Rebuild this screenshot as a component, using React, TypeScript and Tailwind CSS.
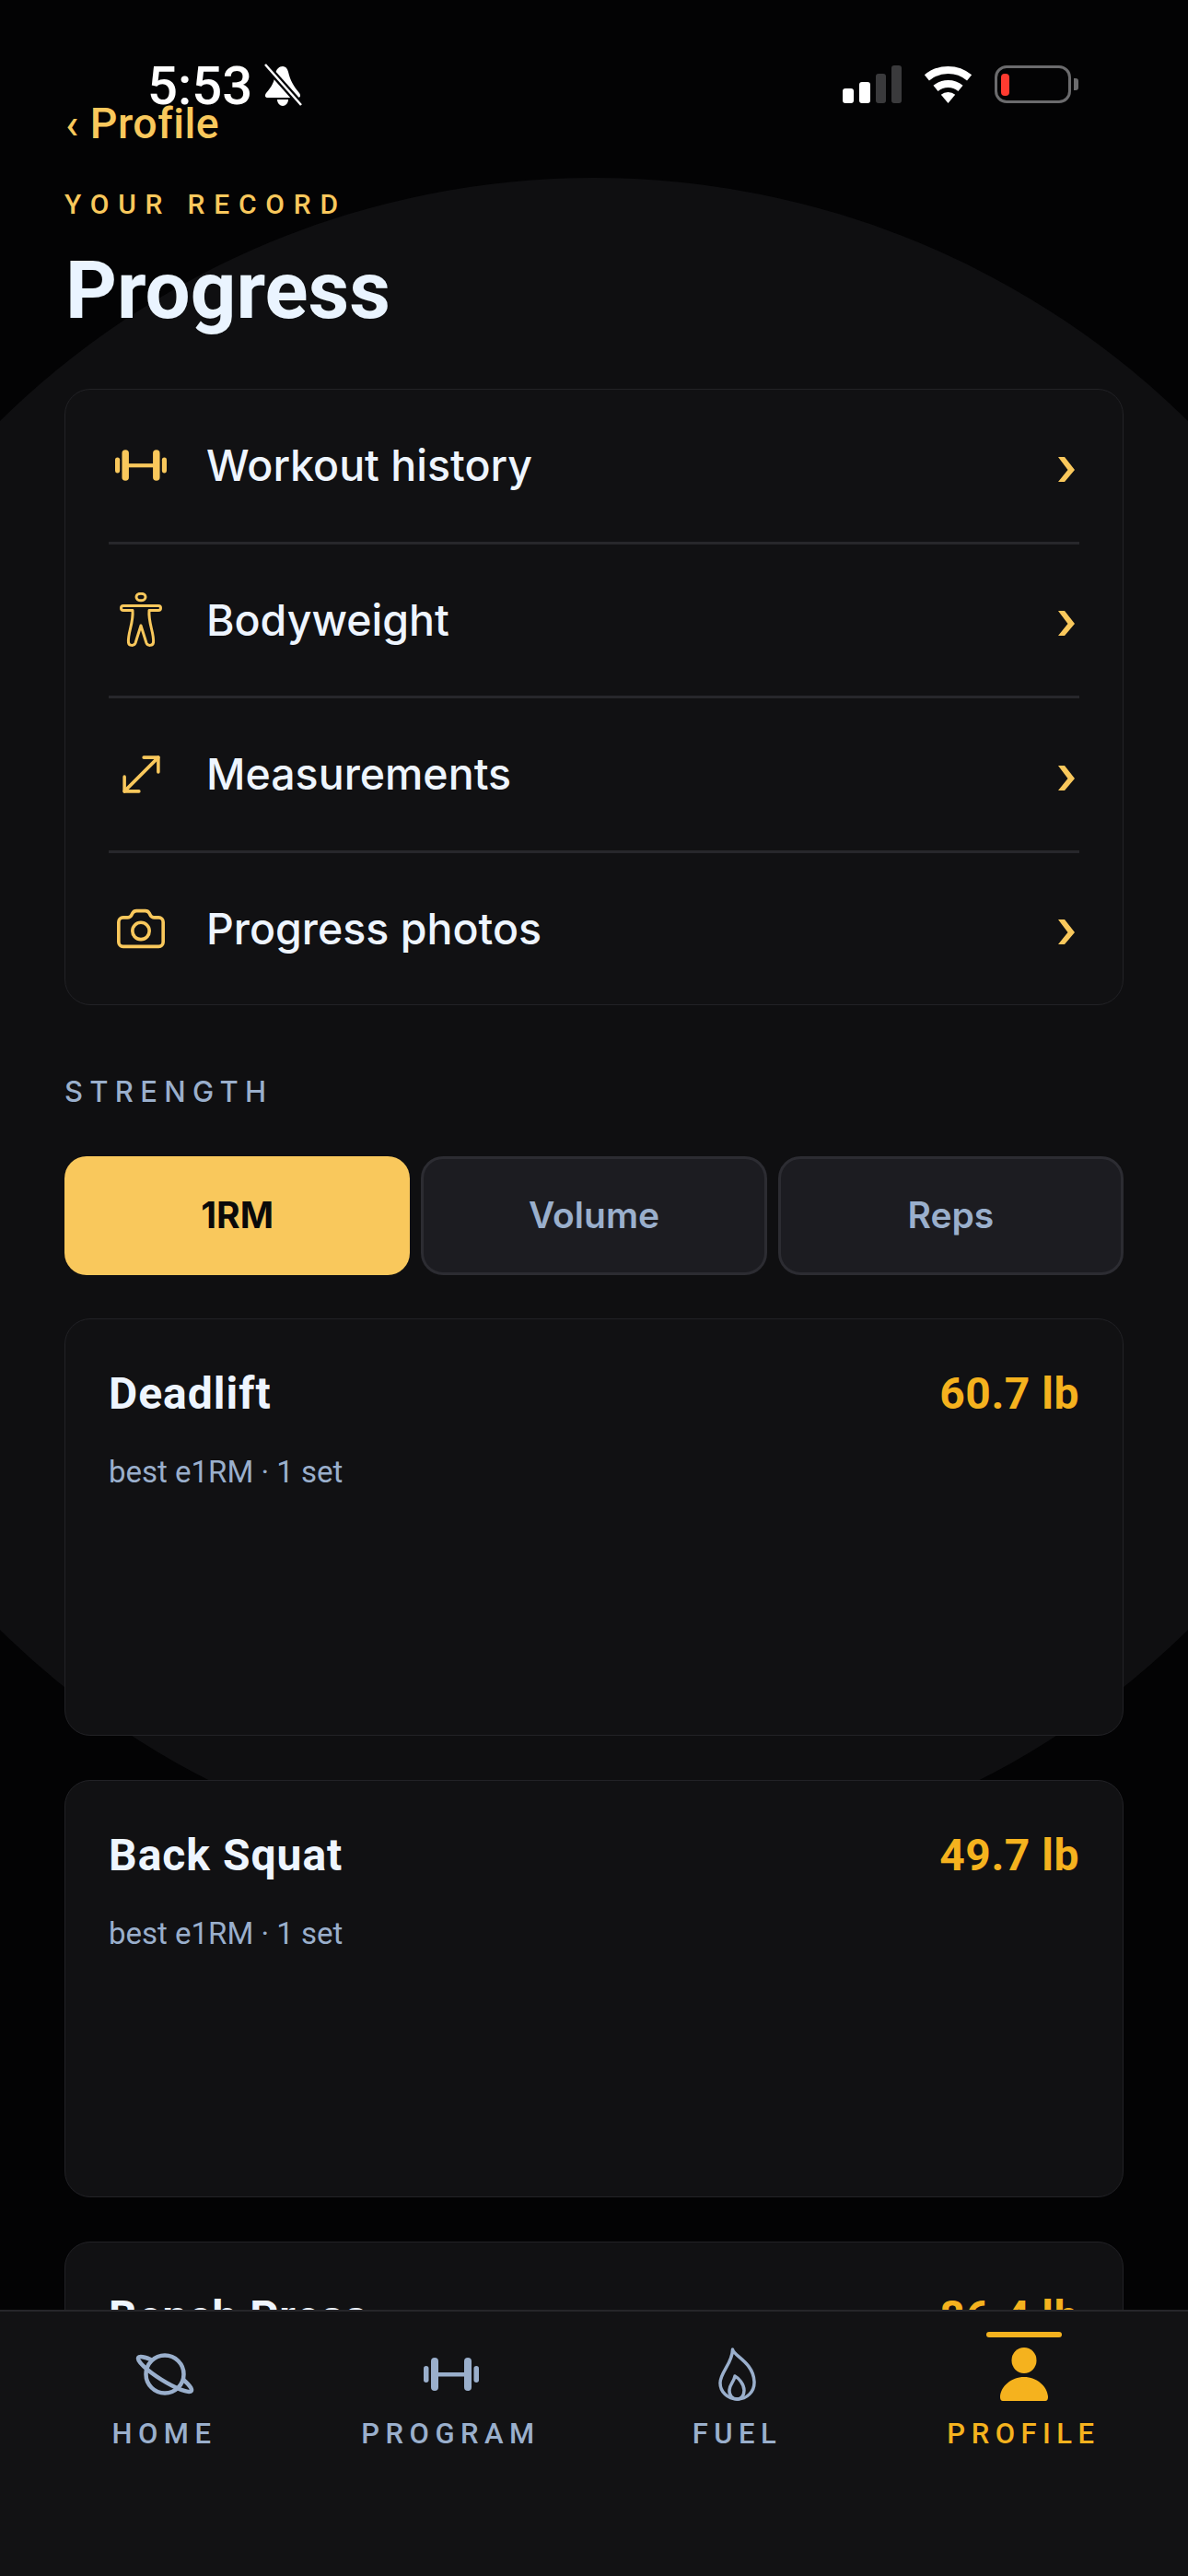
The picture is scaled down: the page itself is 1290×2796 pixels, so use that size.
import { MoveDiagonal } from 'lucide-react';

const GOLD = '#F9C85C';

function Dumbbell({ className }: { className?: string }) {
  return (
    <svg viewBox="0 0 60 36" className={className} fill="currentColor">
      <rect x="0" y="9" width="5.500" height="18" rx="2.750" />
      <rect x="8" y="0" width="8" height="36" rx="4" />
      <rect x="44" y="0" width="8" height="36" rx="4" />
      <rect x="54.500" y="9" width="5.500" height="18" rx="2.750" />
      <rect x="14" y="16" width="32" height="4.500" />
    </svg>
  );
}

function BodyIcon({ className }: { className?: string }) {
  return (
    <svg viewBox="0 0 48 60" className={className} fill="none" stroke="currentColor" strokeWidth="3" strokeLinejoin="round" strokeLinecap="round">
      <ellipse cx="24" cy="5" rx="5" ry="3.800" />
      <path d="M5 14.500h38a2.500 2.500 0 0 1 0 5H33c-.5 6 .5 12 2.500 20 1.500 6 2.500 11 2 15-.5 3.500-6 4-7.500 .5L24 36l-6 19c-1.500 3.500-7 3-7.500-.5-.5-4 .5-9 2-15 2-8 3-14 2.500-20H5a2.500 2.500 0 0 1 0-5Z" />
    </svg>
  );
}

function CameraIcon() {
  return (
    <svg viewBox="0 0 24 24" className="h-[58px] w-[58px]" fill="none" stroke="currentColor" strokeWidth="1.500" strokeLinejoin="round">
      <path d="M13.997 4a2 2 0 0 1 1.760 1.050l.486.9A2 2 0 0 0 18.003 7H20a2 2 0 0 1 2 2v9a2 2 0 0 1-2 2H4a2 2 0 0 1-2-2V9a2 2 0 0 1 2-2h1.997a2 2 0 0 0 1.759-1.048l.489-.904A2 2 0 0 1 10.004 4z" />
      <circle cx="12" cy="13" r="3.800" />
    </svg>
  );
}

function Planet() {
  return (
    <svg viewBox="0 0 66 46" className="h-[46px] w-[66px] overflow-visible" fill="none" stroke="currentColor" strokeWidth="4.500">
      <circle cx="33" cy="23" r="20.500" />
      <g transform="rotate(32 33 23)">
        <path d="M12 17.500A34 7 0 0 0-1 23 34 7 0 0 0 67 23 34 7 0 0 0 54 17.500" strokeLinecap="round" />
      </g>
    </svg>
  );
}

function Flame() {
  return (
    <svg viewBox="0 0 41 58" className="h-[58px] w-[41px]" fill="none" stroke="currentColor" strokeWidth="3.500" strokeLinejoin="round">
      <path d="M15.500 2c1 7 22.500 14 23.500 35 .5 11-8 19-18.500 19C10 56 2 48 2 38.500 2 27 15.500 17 15.500 2Z" />
      <path d="M18 31c4 2 10 9 10 15.500C28 52 25 56 20.500 56 15 56 11.500 51.500 12 46c.5-6 5-9 6-15Z" />
    </svg>
  );
}

function Person() {
  return (
    <svg viewBox="0 0 54 58" className="h-[58px] w-[54px]" fill="currentColor">
      <ellipse cx="27" cy="14" rx="13.500" ry="14" />
      <path d="M1 53C2 42 13 32 27 32s25 10 26 21c.3 3-1 5-3 5H4c-2 0-3.300-2-3-5Z" />
    </svg>
  );
}

function Chevron() {
  return (
    <svg viewBox="0 0 18 27" className="mr-[5px] mt-[8px] h-[27px] w-[18px]" fill={GOLD}>
      <path d="M0 0h7l11 14L7 27H0l10.500-13Z" />
    </svg>
  );
}

function StatusBar() {
  return (
    <div className="absolute inset-x-0 top-0 z-10 h-[120px]">
      <span className="absolute left-[160px] top-[61px] text-[58px] font-medium leading-[64px] text-white [font-family:Roboto,sans-serif]">
        5:53
      </span>
      <svg viewBox="0 0 42 46" className="absolute left-[286px] top-[69px] h-[46px] w-[42px]" fill="white">
        <path d="M21 3c3 0 5 2 6 6 2 9 6 16 12 23 2 3 1 5-2 5H5c-3 0-4-2-2-5 6-7 9-12 10-21 1-5 4-8 8-8Z" />
        <path d="M15 39h12c0 4-3 7-6 7s-6-3-6-7Z" />
        <path d="M1 0l40 45" stroke="#050507" strokeWidth="7" />
        <path d="M2 1l39 44" stroke="white" strokeWidth="2.500" />
      </svg>
      <div className="absolute left-[915px] top-[71px] flex h-[41px] items-end gap-[6px]">
        <div className="h-[16px] w-[12px] rounded-[3px] bg-white" />
        <div className="h-[23px] w-[12px] rounded-[3px] bg-white" />
        <div className="h-[32px] w-[11px] rounded-[3px] bg-[#3a3a3c]" />
        <div className="h-[41px] w-[11px] rounded-[3px] bg-[#3a3a3c]" />
      </div>
      <svg viewBox="0 0 57 41" className="absolute left-[1001px] top-[71px] h-[41px] w-[57px]" fill="none" stroke="white" strokeWidth="8">
        <path d="M5.400 13.400A36 36 0 0 1 51.600 13.400" />
        <path d="M15 24.900A21 21 0 0 1 42 24.900" />
        <path d="M28.500 41L20.800 31.800A12 12 0 0 1 36.200 31.800Z" fill="white" stroke="none" />
      </svg>
      <div className="absolute left-[1080px] top-[71px] flex h-[41px] w-[83px] items-center rounded-[13px] border-[3px] border-[#6b6b6d] pl-[4px]">
        <div className="h-[24px] w-[9px] rounded-[4px] bg-[#ff3b30]" />
      </div>
      <div className="absolute left-[1166px] top-[85px] h-[13px] w-[5px] rounded-r-[3px] bg-[#6b6b6d]" />
    </div>
  );
}

const rows = [
  { label: 'Workout history', icon: <Dumbbell className="h-[34px] w-[56px]" /> },
  { label: 'Bodyweight', icon: <BodyIcon className="h-[60px] w-[48px]" /> },
  { label: 'Measurements', icon: <MoveDiagonal size={63} strokeWidth={1.35} /> },
  { label: 'Progress photos', icon: <CameraIcon /> },
];

function MenuCard() {
  return (
    <div className="rounded-[28px] border border-[#222226] bg-[#111113] px-[47px]">
      {rows.map((row, i) => (
        <div
          key={row.label}
          className={`flex items-center ${i < rows.length - 1 ? 'h-[167.500px] border-b-[3px] border-[#27272b]' : 'h-[164.500px]'}`}
        >
          <div className="flex w-[70px] justify-center text-[#F9C85C]">{row.icon}</div>
          <span className="ml-[36px] flex-1 text-[46.500px] font-medium leading-[56px] text-[#EEF5FF] [font-family:Inter,sans-serif]">
            {row.label}
          </span>
          <Chevron />
        </div>
      ))}
    </div>
  );
}

function Tabs() {
  return (
    <div className="mt-[52px] grid grid-cols-3 gap-[12px]">
      <button className="h-[129px] rounded-[24px] bg-[#F9C85C] text-[39px] font-bold text-[#0a0a0a] [font-family:Inter,sans-serif]">
        1RM
      </button>
      <button className="h-[129px] rounded-[24px] border-[3px] border-[#2c2c32] bg-[#1c1c21] text-[39px] font-semibold text-[#9AAFCC] [font-family:Inter,sans-serif]">
        Volume
      </button>
      <button className="h-[129px] rounded-[24px] border-[3px] border-[#2c2c32] bg-[#1c1c21] text-[39px] font-semibold text-[#9AAFCC] [font-family:Inter,sans-serif]">
        Reps
      </button>
    </div>
  );
}

function LiftCard({ name, value }: { name: string; value: string }) {
  return (
    <div className="h-[453px] shrink-0 rounded-[28px] border border-[#222226] bg-[#111113] px-[47px] pt-[53px]">
      <div className="flex items-center justify-between [font-family:Roboto,sans-serif]">
        <span className="text-[48px] font-bold leading-[56px] tracking-[1px] text-[#EEF5FF]">{name}</span>
        <span className="text-[48px] font-bold leading-[56px] tracking-[0.500px] text-[#F5B21E]">{value}</span>
      </div>
      <p className="mt-[36px] text-[33px] leading-[42px] text-[#9AAFCC] [font-family:Roboto,sans-serif]">
        best e1RM · 1 set
      </p>
    </div>
  );
}

const navItems = [
  { label: 'HOME', icon: <Planet /> },
  { label: 'PROGRAM', icon: <Dumbbell className="h-[36px] w-[60px]" /> },
  { label: 'FUEL', icon: <Flame /> },
  { label: 'PROFILE', icon: <Person />, active: true },
];

function BottomNav() {
  return (
    <nav className="relative grid h-[289px] shrink-0 grid-cols-4 border-t-[2px] border-[#26262a] bg-[#121214] px-[23px]">
      {navItems.map((item) => (
        <div
          key={item.label}
          className={`relative flex flex-col items-center ${item.active ? 'text-[#F5B21E]' : 'text-[#9AAFCC]'}`}
        >
          {item.active && <div className="absolute top-[22px] h-[6px] w-[82px] rounded-full bg-[#F5B21E]" />}
          <div className="mt-[39px] flex h-[58px] items-center justify-center">{item.icon}</div>
          <span className="mt-[18px] text-[31px] font-medium leading-[36px] tracking-[6.500px] [font-family:Roboto,sans-serif]">
            {item.label}
          </span>
        </div>
      ))}
    </nav>
  );
}

export default function App() {
  return (
    <div className="relative flex h-[2796px] w-[1290px] flex-col overflow-hidden bg-[#030304]">
      <div className="absolute left-[-275px] top-[193px] h-[1840px] w-[1840px] rounded-full bg-[#0f0f11]" />
      <StatusBar />

      <main className="relative min-h-0 flex-1 overflow-hidden px-[70px] pt-[107px]">
        <div className="ml-[1px] text-[46.500px] font-medium leading-[54px] tracking-[0.500px] text-[#F9C85C] [font-family:Roboto,sans-serif]">
          ‹ Profile
        </div>
        <div className="mt-[43px] text-[30px] font-medium leading-[36px] tracking-[9.800px] text-[#F9C85C] [font-family:Roboto,sans-serif]">
          YOUR RECORD
        </div>
        <h1 className="ml-[1px] mt-[25px] text-[87px] font-bold leading-[100px] text-[#EAF4FF] [font-family:Roboto,sans-serif]">
          Progress
        </h1>
        <div className="mt-[57px]">
          <MenuCard />
        </div>
        <div className="mt-[76px] text-[31px] font-medium leading-[36px] tracking-[7.300px] text-[#9AAFCC] [font-family:Inter,sans-serif]">
          STRENGTH
        </div>
        <Tabs />
        <div className="mt-[47px] flex flex-col gap-[48px]">
          <LiftCard name="Deadlift" value="60.7 lb" />
          <LiftCard name="Back Squat" value="49.7 lb" />
          <LiftCard name="Bench Press" value="86.4 lb" />
        </div>
      </main>

      <BottomNav />
    </div>
  );
}
